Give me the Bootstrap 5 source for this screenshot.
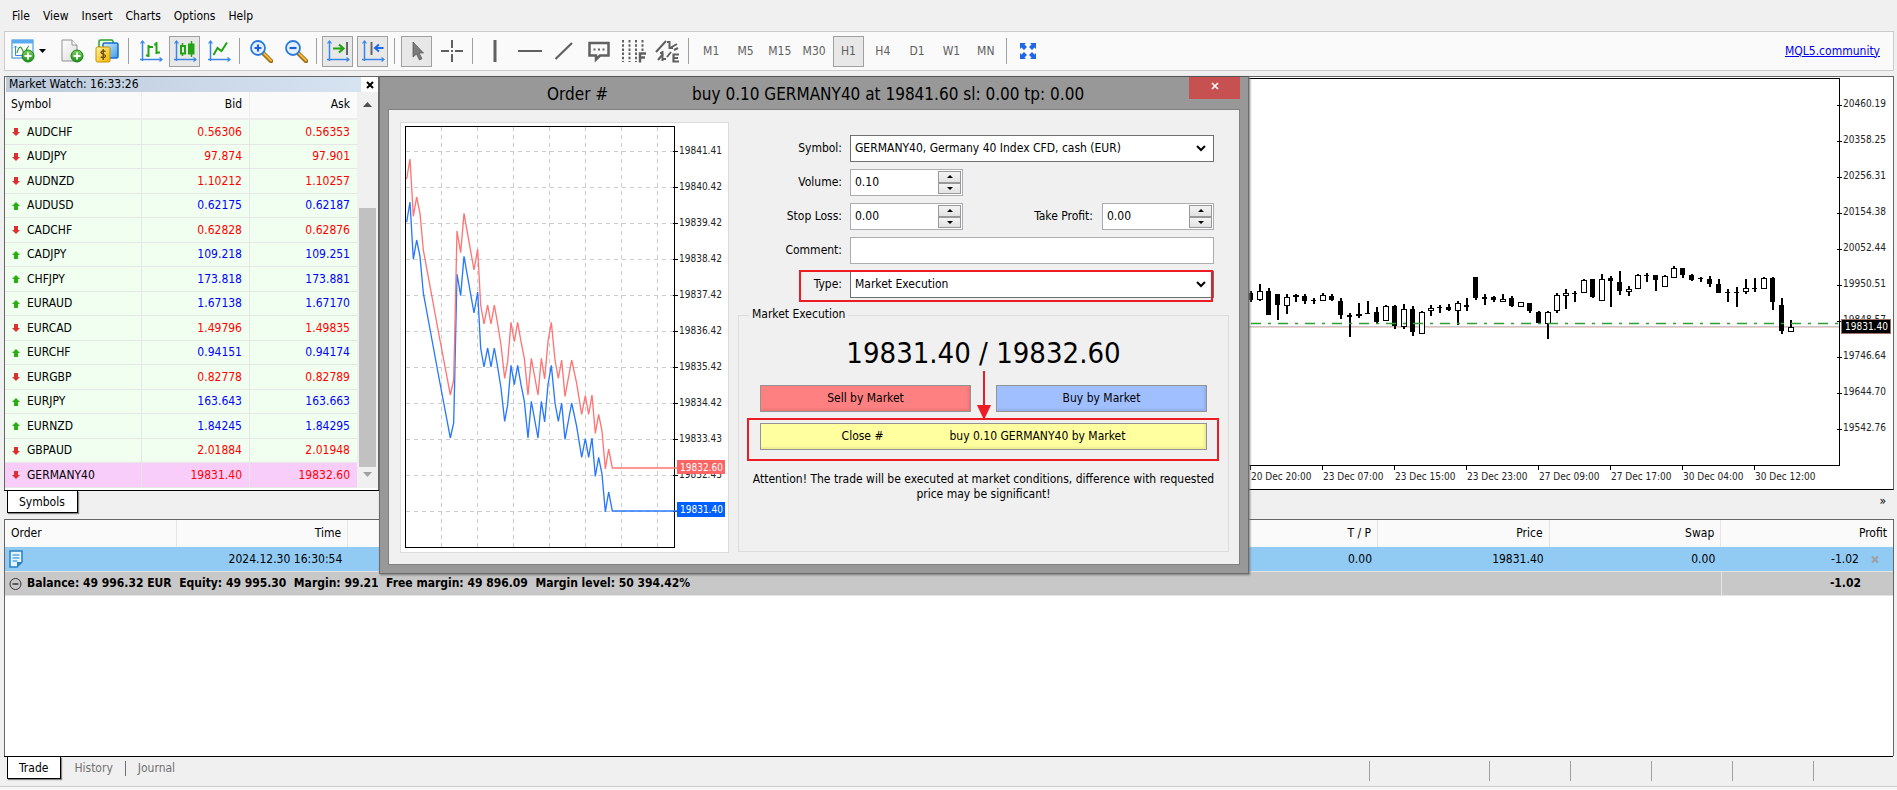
<!DOCTYPE html>
<html lang="en">
<head>
<meta charset="utf-8">
<meta name="viewport" content="width=device-width, initial-scale=1">
<title>Trading Terminal</title>
<link href="https://cdn.jsdelivr.net/npm/bootstrap@5.3.0/dist/css/bootstrap.min.css" rel="stylesheet">
<style>
  body { font-family: "DejaVu Sans Condensed", "DejaVu Sans", sans-serif; font-size: 12px; line-height: 15px; background: #f0f0f0; color: #000; overflow: hidden; }
  a { color: #0000ee; }
  .menu-bar { height: 31px; padding: 2px 0 0 12px; gap: 13px; }
  .menu-bar a { color: #000; text-decoration: none; }
  .tool-bar { height: 40px; margin: 0 3px 0 4px; padding: 0 13px 0 2px; background: #fafafa; border: 1px solid #ccc; }
  .tool-btn { width: 31px; height: 31px; padding: 0; border: 1px solid transparent; background: none; display: flex; align-items: center; justify-content: center; color: #5f5f5f; border-radius: 0; }
  .tool-btn.pressed { background: #e8e8e8; border-color: #a0a0a0; }
  .tool-sep { width: 1px; height: 26px; background: #a0a0a0; margin: 0 5px; }
  .tool-sep.roomy { margin: 0 6px; }
  .tool-sep.snug { margin: 0 5px 0 3px; }
  .tool-group { display: flex; gap: 4px; }
  .style-group { gap: 3px; }
  .draw-group { width: 207px; justify-content: space-around; gap: 0; }
  .period-group { width: 309px; gap: 0; justify-content: space-around; }
  .work-area { position: relative; margin: 5px 3px 0 4px; }
  .watch-panel { width: 375px; height: 414px; border: 1px solid #666; border-bottom: 0; background: #fff; }
  .watch-title { height: 15px; margin: 0 0 0 1px; }
  .watch-title h2 { font-size: 12px; line-height: 15px; margin: 0; padding-left: 3px; width: 355px; background: linear-gradient(90deg, #bccbdc, #d6e3f1); }
  .watch-title button { border: 0; background: #fff; width: 17px; padding: 0; line-height: 0; }
  .quote-table { width: 352px; table-layout: fixed; border-collapse: separate; border-spacing: 0; }
  .quote-table th { height: 28px; font-weight: 400; background: #fafafa; border-bottom: 2px solid #ececec; border-right: 1px solid #ececec; padding: 0 7px 1px 6px; }
  .quote-table td { height: 25px; background: #f0fff0; border-bottom: 1px solid #e6e6e6; border-right: 1px solid #e6e6e6; padding: 0 7px; }
  .quote-table tr:nth-child(even) td { height: 24px; }
  .quote-table td:last-child, .quote-table th:last-child { border-right: 0; }
  .quote-table tr.active-row td { background: #f9cdfa; }
  .quote-table .fall { color: #f00; }
  .quote-table .rise { color: #00f; }
  .quote-name { display: flex; align-items: center; gap: 7px; }
  .watch-scroll { width: 21px; background: #f0f0f0; padding: 9px 2px 7px; }
  .scroll-thumb { width: 17px; height: 259px; margin-top: 100px; background: #c1c1c1; }
  .chart-panel { border: 1px solid #666; border-left: 0; border-bottom-color: #000; background: #fff; height: 414px; }
  .page-tabs { border-top: 1px solid #000; padding-left: 3px; }
  .page-tab { border: 0; background: none; color: #707070; padding: 3px 12px 0 13px; height: 20px; line-height: 15px; }
  .page-tab.current { background: #fff; color: #000; border: 1px solid #000; border-top: 0; height: 22px; padding: 2px 12px 0 11px; box-shadow: 1px 1px 1px #888; }
  .page-tab.divided { border-left: 1px solid #707070; height: 15px; padding: 0 12px; margin-top: 4px; line-height: 15px; }
  .trade-area { padding-top: 6px; }
  .trade-panel { margin: 0 3px 0 4px; border: 1px solid #666; border-bottom: 0; background: #fff; }
  .trade-table { width: 100%; table-layout: fixed; border-collapse: separate; border-spacing: 0; }
  .trade-table th { height: 27px; font-weight: 400; background: #fafafa; border-right: 1px solid #e4e4e4; padding: 0 6px; }
  .trade-table td { padding: 0 6px; }
  .trade-table th:last-child { border-right: 0; }
  .order-row td { height: 25px; background: #91cbf4; border-bottom: 1px solid #e4e4e4; }
  .sum-row td { height: 24px; background: #c8c8c8; font-weight: 700; border-bottom: 1px solid #e4e4e4; }
  .sum-row td:last-child { border-left: 1px solid #e4e4e4; padding-right: 32px; }
  .bottom-tabs { height: 30px; }
  .status-cells { height: 20px; }
  .status-cells i { width: 1px; background: #a0a0a0; height: 20px; }
  .status-line { height: 4px; border-top: 1px solid #ccc; background: #f7f7f7; }

  /* Order window that floats over the terminal */
  .order-window { position: absolute; left: 375px; top: 0; width: 870px; z-index: 10; background: #989898; border: 1px solid #6c6c6c; border-top-color: #555; padding: 0 8px 8px; box-shadow: 1px 1px 2px #777; }
  .order-title { height: 32px; font-size: 17px; line-height: 34px; gap: 84px; padding-left: 159px; position: relative; }
  .order-title span { white-space: pre; }
  .order-close { position: absolute; right: 0; top: 0; width: 51px; height: 22px; border: 0; background: #c75050; padding: 0 0 4px; line-height: 0; }
  .order-body { height: 456px; background: #f0f0f0; border: 1px solid #808080; padding: 12px 10px 12px 11px; gap: 9px; }
  .tick-box { width: 329px; height: 431px; background: #fff; border: 1px solid #dcdcdc; }
  .order-form { width: 491px; padding-top: 13px; }
  .form-line { display: flex; align-items: center; height: 27px; margin-bottom: 7px; padding-right: 15px; }
  .form-line label { width: 104px; text-align: right; margin-right: 8px; flex: none; }
  .form-line label.next-label { width: auto; margin-left: auto; margin-right: 9px; }
  .field-box { height: 27px; border: 1px solid #abadb3; border-radius: 0; background-color: #fff; padding: 0 5px; font-size: 12px; line-height: 15px; color: #000; min-height: 0; flex: 1; min-width: 0; }
  select.field-box { border-color: #707070; appearance: none; background-image: url("data:image/svg+xml,%3Csvg xmlns='http://www.w3.org/2000/svg' width='10' height='7'%3E%3Cpath d='M1 1l4 4 4-4' fill='none' stroke='%23000' stroke-width='2'/%3E%3C/svg%3E"); background-repeat: no-repeat; background-position: right 7px center; background-size: 10px 7px; padding: 0 20px 0 4px; }
  .spin-box { width: 113px; height: 27px; border: 1px solid #abadb3; background: #fff; display: flex; flex: none; padding: 1px; }
  .spin-box.narrow { width: 112px; }
  .spin-box input { border: 0; width: 86px; min-width: 0; padding: 0 3px; outline: 0; flex: 1; }
  .spin-box button { display: flex; align-items: center; justify-content: center; width: 23px; flex: 1; padding: 0; border: 1px solid #999; background: linear-gradient(#f4f4f4, #e2e2e2); }
  .type-line { position: relative; }
  .type-line::after, .close-line::after { content: ""; position: absolute; border: 2px solid #ed1c24; pointer-events: none; }
  .type-line::after { left: 61px; right: 16px; top: -1px; bottom: -4px; }
  .exec-box { border: 1px solid #dcdcdc; height: 237px; margin-top: 17px; padding: 0 21px; position: relative; }
  .exec-box legend { position: absolute; left: 10px; top: -9px; width: auto; padding: 0 3px; font-size: 12px; line-height: 15px; background: #f0f0f0; margin: 0; }
  .big-quote { font-size: 29px; line-height: 34px; padding-top: 20px; margin-bottom: 15px; text-align: center; }
  .deal-btn { height: 27px; border: 1px solid #939393; border-radius: 0; font-size: 12px; line-height: 15px; padding: 0; color: #000; box-shadow: inset -2px -2px 2px rgba(0,0,0,.08); }
  .sell-btn { background: #ff8080; width: 211px; }
  .buy-btn { background: #a0bfff; width: 211px; }
  .shut-btn { background: #ffffa0; width: 100%; white-space: pre; display: flex; justify-content: center; align-items: center; gap: 66px; }
  .close-line { position: relative; margin-top: 11px; }
  .close-line::after { left: -13px; right: -12px; top: -5px; bottom: -11px; }
  .arrow-mark { position: absolute; left: 50%; top: 55px; margin-left: -7px; }
  .warn-text { margin: 22px -12px 0; text-align: center; }
  svg text { font-size: 10px; fill: #222; }
  svg text.tag-text { fill: #fff; }
</style>
</head>
<body>
<div class="d-flex flex-column vh-100">
  <nav class="menu-bar d-flex align-items-center flex-shrink-0" aria-label="Main menu">
    <a href="#">File</a><a href="#">View</a><a href="#">Insert</a><a href="#">Charts</a><a href="#">Options</a><a href="#">Help</a>
  </nav>

  <div class="tool-bar d-flex align-items-center flex-shrink-0">
    <svg width="0" height="0" class="position-absolute">
      <defs>
        <linearGradient id="gPlus" x1="0" y1="0" x2="0" y2="1"><stop offset="0" stop-color="#7ed45a"/><stop offset="1" stop-color="#189018"/></linearGradient>
        <linearGradient id="gPage" x1="0" y1="0" x2="1" y2="1"><stop offset="0" stop-color="#fff"/><stop offset="1" stop-color="#dcdcdc"/></linearGradient>
        <linearGradient id="gGold" x1="0" y1="0" x2="1" y2="1"><stop offset="0" stop-color="#fff3a0"/><stop offset="1" stop-color="#f0b400"/></linearGradient>
        <linearGradient id="gBlue" x1="0" y1="0" x2="1" y2="1"><stop offset="0" stop-color="#d8f0ff"/><stop offset="1" stop-color="#3a9be8"/></linearGradient>
        <g id="plusBall"><circle cx="17" cy="17" r="6" fill="url(#gPlus)" stroke="#168016"/><path d="M17 13.500v7M13.500 17h7" stroke="#fff" stroke-width="2"/></g>
        <g id="axes" stroke="#3a86e8" fill="none" stroke-width="1.500"><path d="M3.500 2v20M1 20.500h22"/><path d="M1.500 4.500L3.500 2l2 2.500M20.500 18.500l2.500 2-2.500 2" stroke-width="1.200"/></g>
        <g id="lens"><path d="M14 14l8 8" stroke="#9a6a10" stroke-width="4.500" stroke-linecap="round"/><path d="M14 13.500l8 8" stroke="#f0b840" stroke-width="2" stroke-linecap="round"/><circle cx="9" cy="9" r="7" fill="#e6f2ff" stroke="#2a7ae0" stroke-width="1.800"/></g>
      </defs>
    </svg>
    <button class="tool-btn" aria-label="New chart"><svg width="24" height="24"><rect x="1" y="1" width="21" height="18" fill="#fff" stroke="#2a86dc"/><path d="M1 1h21v3.500H1z" fill="#5aabf0"/><path d="M4.500 7v9.500H17M3 8.500L4.500 7 6 8.500" fill="none" stroke="#3a86e8"/><path d="M6 14c2-8 4-7 6-2s4-5 6-5" fill="none" stroke="#30a030" stroke-width="1.200"/><use href="#plusBall"/></svg></button>
    <svg width="18" height="6" viewBox="0 0 18 6"><path d="M1 1h7L4.500 5z"/></svg>
    <div class="tool-group">
      <button class="tool-btn" aria-label="New order"><svg width="24" height="24"><path d="M2 1h10l5 5v16H2z" fill="url(#gPage)" stroke="#909090"/><path d="M12 1v5h5" fill="#fff" stroke="#909090"/><use href="#plusBall"/></svg></button>
      <button class="tool-btn" aria-label="Deposit"><svg width="24" height="24"><rect x="4" y="1" width="14" height="14" rx="1.500" fill="#e8ffe0" stroke="#2aa02a" stroke-width="1.500"/><rect x="8" y="4" width="15" height="15" rx="1.500" fill="url(#gBlue)" stroke="#1a6ad0" stroke-width="1.500"/><rect x="1" y="8" width="14" height="15" rx="1.500" fill="url(#gGold)" stroke="#c89000"/><path d="M10.500 12.500c-1-1-4.500-1-4.500 1s4.500 1.500 4.500 3.500-3.500 2-4.800.8M8.200 10v11" fill="none" stroke="#6a4800" stroke-width="1.300"/></svg></button>
    </div>
    <div class="tool-sep roomy"></div>
    <div class="tool-group style-group">
      <button class="tool-btn" aria-label="Bar chart"><svg width="24" height="24"><use href="#axes"/><path d="M9.500 6v12M7 16.500h2.500M9.500 8H14M17.500 3v12M15 5.500h2.500M17.500 13.500H21" stroke="#22a512" stroke-width="2" fill="none"/></svg></button>
      <button class="tool-btn pressed" aria-label="Candles"><svg width="24" height="24"><use href="#axes"/><path d="M9.500 4v13M18.500 2v16" stroke="#22a512" stroke-width="1.500"/><rect x="8" y="7" width="4" height="7.500" fill="#e8e8e8" stroke="#22a512" stroke-width="2"/><rect x="15" y="4.500" width="6.500" height="11" fill="#22a512"/></svg></button>
      <button class="tool-btn" aria-label="Line chart"><svg width="24" height="24"><use href="#axes"/><path d="M6.500 16l4-7 4 3 5.500-8.500" stroke="#22a512" stroke-width="2" fill="none"/></svg></button>
    </div>
    <div class="tool-sep"></div>
    <div class="tool-group">
      <button class="tool-btn" aria-label="Zoom in"><svg width="24" height="24"><use href="#lens"/><path d="M9 5.500v7M5.500 9h7" stroke="#1e60d8" stroke-width="2.200"/></svg></button>
      <button class="tool-btn" aria-label="Zoom out"><svg width="24" height="24"><use href="#lens"/><path d="M5.500 9h7" stroke="#1e60d8" stroke-width="2.200"/></svg></button>
    </div>
    <div class="tool-sep"></div>
    <div class="tool-group">
      <button class="tool-btn pressed" aria-label="Auto scroll"><svg width="24" height="24"><use href="#axes"/><path d="M7 9.500h9M13 5.500l4.500 4-4.500 4" stroke="#22a512" stroke-width="2.200" fill="none"/><path d="M21 3v13" stroke="#666" stroke-width="2"/></svg></button>
      <button class="tool-btn pressed" aria-label="Chart shift"><svg width="24" height="24"><use href="#axes"/><path d="M10.500 3v13" stroke="#666" stroke-width="2"/><path d="M14.500 9h8M18 5.500L14 9l4 3.500" stroke="#1e68e8" stroke-width="2" fill="none"/></svg></button>
    </div>
    <div class="tool-sep roomy"></div>
    <div class="tool-group">
      <button class="tool-btn pressed" aria-label="Cursor"><svg width="24" height="24"><path d="M8 3v15l3.500-3 3 6 2.500-1.300-3-5.700h4.500z" fill="#7c7c7c" stroke="#5c5c5c" stroke-width=".8"/></svg></button>
      <button class="tool-btn" aria-label="Crosshair"><svg width="24" height="24"><path d="M12 1v8M12 15v8M1 12h8M15 12h8" stroke="#606060" stroke-width="2"/><rect x="11" y="11" width="2" height="2" fill="#606060"/></svg></button>
    </div>
    <div class="tool-sep"></div>
    <div class="tool-group draw-group">
      <button class="tool-btn" aria-label="Vertical line"><svg width="24" height="24"><path d="M12 1v22" stroke="#606060" stroke-width="3"/></svg></button>
      <button class="tool-btn" aria-label="Horizontal line"><svg width="24" height="24"><path d="M0 12h24" stroke="#606060" stroke-width="2"/></svg></button>
      <button class="tool-btn" aria-label="Trend line"><svg width="24" height="24"><path d="M3.500 20L20 4" stroke="#606060" stroke-width="2.200"/></svg></button>
      <button class="tool-btn" aria-label="Text label"><svg width="24" height="24"><path d="M2.500 4h19v12.500H13L9 20.500v-4H2.500z" fill="none" stroke="#606060" stroke-width="2.500"/><path d="M6.500 10.500h2M11 10.500h2M15.500 10.500h2" stroke="#606060" stroke-width="2.200"/></svg></button>
      <button class="tool-btn" aria-label="Fibonacci"><svg width="25" height="24"><path d="M2 1v22M8.500 1v22M15 1v22M21.500 1v11" stroke="#606060" stroke-width="2" stroke-dasharray="2.500 1.700"/><path d="M19 23.500v-9h6M19 18.500h5" stroke="#606060" stroke-width="2.500" fill="none"/></svg></button>
      <button class="tool-btn" aria-label="Equidistant channel"><svg width="25" height="24"><path d="M1 13L11 2M3 21l5-6M15 9l7-4" stroke="#606060" stroke-width="2"/><path d="M14.500 2v8M12 3h2.500M14.500 9H18M7.500 12v10M5 14h2.500M7.500 20H11M12 18l4-5M19 11l4-2" stroke="#606060" stroke-width="2" fill="none"/><path d="M24 15.500h-5.500v7H24M18.500 19H23" stroke="#606060" stroke-width="2.200" fill="none"/></svg></button>
    </div>
    <div class="tool-sep snug"></div>
    <div class="tool-group period-group">
      <button class="tool-btn">M1</button><button class="tool-btn">M5</button><button class="tool-btn">M15</button><button class="tool-btn">M30</button><button class="tool-btn pressed">H1</button><button class="tool-btn">H4</button><button class="tool-btn">D1</button><button class="tool-btn">W1</button><button class="tool-btn">MN</button>
    </div>
    <div class="tool-sep snug"></div>
    <button class="tool-btn" aria-label="Full screen"><svg width="16" height="16"><g fill="#1e68e8"><path d="M0 0h6L4.500 1.500 7 4 4 7 1.500 4.500 0 6z"/><path d="M16 0h-6l1.500 1.500L9 4l3 3 2.500-2.500L16 6z"/><path d="M0 16h6l-1.500-1.500L7 12 4 9l-2.500 2.500L0 10z"/><path d="M16 16h-6l1.500-1.500L9 12l3-3 2.500 2.500L16 10z"/></g></svg></button>
    <a href="#" class="ms-auto">MQL5.community</a>
  </div>

  <main class="work-area flex-shrink-0">
    <div class="d-flex">
      <section class="flex-shrink-0">
        <div class="watch-panel">
          <div class="watch-title d-flex"><h2 class="fw-normal">Market Watch: 16:33:26</h2><button aria-label="Close"><svg width="8" height="8"><path d="M1 1l6 6M7 1L1 7" stroke="#000" stroke-width="2"/></svg></button></div>
          <div class="d-flex">
            <table class="quote-table">
              <colgroup><col style="width:137px"><col style="width:108px"><col style="width:107px"></colgroup>
              <thead><tr><th>Symbol</th><th class="text-end">Bid</th><th class="text-end">Ask</th></tr></thead>
              <tbody id="quotes"></tbody>
            </table>
            <div class="watch-scroll">
              <svg class="d-block mx-auto" width="9" height="7"><path d="M0 6l4.500-5L9 6z" fill="#505050"/></svg>
              <div class="scroll-thumb"></div>
              <svg class="d-block mx-auto mt-1" width="9" height="7"><path d="M0 1l4.500 5L9 1z" fill="#a0a0a0"/></svg>
            </div>
          </div>
        </div>
        <div class="page-tabs d-flex"><button class="page-tab current">Symbols</button></div>
      </section>
      <section class="flex-grow-1">
        <div class="chart-panel"><svg id="mainChart" class="d-block" width="100%" height="412" viewBox="380 77 1513 412" preserveAspectRatio="xMaxYMin meet"></svg></div>
        <div class="text-end pt-1 pe-1 me-1">»</div>
      </section>
    </div>

    <div class="order-window" role="dialog" aria-label="Order">
      <div class="order-title d-flex"><span>Order #</span><span>buy 0.10 GERMANY40 at 19841.60 sl: 0.00 tp: 0.00</span>
        <button class="order-close" aria-label="Close window"><svg width="8" height="8"><path d="M1 1l6 6M7 1L1 7" stroke="#fff" stroke-width="1.600"/></svg></button>
      </div>
      <div class="order-body d-flex">
        <div class="tick-box flex-shrink-0"><svg id="tickChart" class="d-block" width="327" height="429" viewBox="401 123 327 429"></svg></div>
        <form class="order-form">
          <div class="form-line"><label for="fSymbol">Symbol:</label><select id="fSymbol" class="field-box"><option>GERMANY40, Germany 40 Index CFD, cash (EUR)</option></select></div>
          <div class="form-line"><label for="fVolume">Volume:</label><div class="spin-box"><input id="fVolume" value="0.10"><div class="d-flex flex-column"><button type="button" aria-label="More"><svg width="6" height="3"><path d="M0 3l3-3 3 3z"/></svg></button><button type="button" aria-label="Less"><svg width="6" height="3"><path d="M0 0l3 3 3-3z"/></svg></button></div></div></div>
          <div class="form-line"><label for="fStop">Stop Loss:</label><div class="spin-box"><input id="fStop" value="0.00"><div class="d-flex flex-column"><button type="button" aria-label="More"><svg width="6" height="3"><path d="M0 3l3-3 3 3z"/></svg></button><button type="button" aria-label="Less"><svg width="6" height="3"><path d="M0 0l3 3 3-3z"/></svg></button></div></div>
            <label for="fTake" class="next-label">Take Profit:</label><div class="spin-box narrow"><input id="fTake" value="0.00"><div class="d-flex flex-column"><button type="button" aria-label="More"><svg width="6" height="3"><path d="M0 3l3-3 3 3z"/></svg></button><button type="button" aria-label="Less"><svg width="6" height="3"><path d="M0 0l3 3 3-3z"/></svg></button></div></div></div>
          <div class="form-line"><label for="fComment">Comment:</label><input id="fComment" class="field-box"></div>
          <div class="form-line type-line"><label for="fType">Type:</label><select id="fType" class="field-box"><option>Market Execution</option></select></div>
          <fieldset class="exec-box">
            <legend>Market Execution</legend>
            <div class="big-quote">19831.40 / 19832.60</div>
            <svg class="arrow-mark" width="14" height="49"><path d="M7 0v36" stroke="#ed1c24" stroke-width="2"/><path d="M0 34h14L7 49z" fill="#ed1c24"/></svg>
            <div class="d-flex justify-content-between"><button type="button" class="deal-btn sell-btn">Sell by Market</button><button type="button" class="deal-btn buy-btn">Buy by Market</button></div>
            <div class="close-line"><button type="button" class="deal-btn shut-btn"><span>Close #</span><span>buy 0.10 GERMANY40 by Market</span></button></div>
            <p class="warn-text">Attention! The trade will be executed at market conditions, difference with requested price may be significant!</p>
          </fieldset>
        </form>
      </div>
    </div>
  </main>

  <section class="trade-area d-flex flex-column flex-grow-1">
    <div class="trade-panel flex-grow-1">
      <table class="trade-table">
        <thead><tr><th>Order</th><th class="text-end">Time</th><th></th><th></th><th></th><th></th><th></th><th class="text-end">T / P</th><th class="text-end">Price</th><th class="text-end">Swap</th><th class="text-end">Profit</th></tr></thead>
        <tbody>
          <tr class="order-row"><td class="ps-1"><svg class="d-block" width="14" height="18"><path d="M1 1h12v11l-5 5H1z" fill="#e4f4ff" stroke="#2a80c0" stroke-width="1.500"/><path d="M3.500 5h7M3.500 8h7M3.500 11h5" stroke="#58a8e0" stroke-width="1.300"/><path d="M13 12H8v5z" fill="#2a80c0"/></svg></td><td class="text-end">2024.12.30 16:30:54</td><td></td><td></td><td></td><td></td><td></td><td class="text-end">0.00</td><td class="text-end">19831.40</td><td class="text-end">0.00</td>
            <td><div class="d-flex justify-content-end align-items-center pe-2"><span class="me-2 pe-1">-1.02</span><svg width="8" height="9"><path d="M1 1.500l6 6M7 1.500l-6 6" stroke="#a0a0a0" stroke-width="2.200"/></svg></div></td></tr>
          <tr class="sum-row"><td colspan="10" class="ps-1"><div class="d-flex align-items-center"><svg class="me-1" width="14" height="14"><circle cx="6.500" cy="7" r="5.500" fill="none" stroke="#333"/><path d="M3.500 7h6" stroke="#333" stroke-width="1.500"/></svg><span>Balance: 49 996.32 EUR&nbsp; Equity: 49 995.30&nbsp; Margin: 99.21&nbsp; Free margin: 49 896.09&nbsp; Margin level: 50 394.42%</span></div></td><td class="text-end">-1.02</td></tr>
        </tbody>
      </table>
    </div>
    <div class="bottom-tabs d-flex">
      <div class="page-tabs d-flex align-items-start flex-grow-1 mx-1"><button class="page-tab current">Trade</button><button class="page-tab">History</button><button class="page-tab divided">Journal</button>
        <div id="statusCells" class="status-cells d-flex ms-auto mt-1"></div></div>
    </div>
    <div class="status-line"></div>
  </section>
</div>

<script>
  // Quotes: symbol, bid, ask, rising
  const quotes = [
    ['AUDCHF','0.56306','0.56353',0],['AUDJPY','97.874','97.901',0],['AUDNZD','1.10212','1.10257',0],['AUDUSD','0.62175','0.62187',1],
    ['CADCHF','0.62828','0.62876',0],['CADJPY','109.218','109.251',1],['CHFJPY','173.818','173.881',1],['EURAUD','1.67138','1.67170',1],
    ['EURCAD','1.49796','1.49835',0],['EURCHF','0.94151','0.94174',1],['EURGBP','0.82778','0.82789',0],['EURJPY','163.643','163.663',1],
    ['EURNZD','1.84245','1.84295',1],['GBPAUD','2.01884','2.01948',0],['GERMANY40','19831.40','19832.60',0]];
  document.getElementById('quotes').innerHTML = quotes.map(([s, b, a, up]) => {
    const c = up ? 'rise' : 'fall';
    const arrow = up ? '<path d="M4 0l4 4H6v4H2V4H0z" fill="#28b010"/>' : '<path d="M4 8l4-4H6V0H2v4H0z" fill="#dc3030"/>';
    return `<tr class="${s === 'GERMANY40' ? 'active-row' : ''}"><td><span class="quote-name"><svg class="flex-shrink-0" width="8" height="8">${arrow}</svg>${s}</span></td><td class="text-end ${c}">${b}</td><td class="text-end ${c}">${a}</td></tr>`;
  }).join('');

  // Hourly candles: high, open/close top, open/close bottom, low, filled. Three units to a pixel, from y = 60.
  const candles = [
    [694,700,720,725,1],[672,694,718,722,0],[684,694,764,766,1],[702,702,734,781,1],[702,712,735,762,0],[702,704,709,727,0],[702,708,722,733,1],[713,720,724,733,1],
    [699,706,721,722,0],[701,708,720,722,1],[714,724,764,777,1],[760,764,772,832,1],[728,762,766,773,0],[723,758,761,762,1],[741,756,787,790,1],[736,739,781,782,0],
    [736,737,799,808,1],[732,748,799,806,0],[739,748,815,827,1],[752,757,818,820,0],[736,744,751,767,0],[736,742,745,759,1],[733,742,751,752,1],[724,730,751,795,0],
    [715,736,740,754,1],[652,652,713,721,1],[702,712,717,735,1],[709,710,721,725,1],[701,718,723,725,0],[709,714,737,740,1],[726,727,739,740,0],[729,730,754,760,1],
    [753,755,789,790,1],[754,755,788,838,0],[699,706,751,760,0],[687,700,706,748,0],[693,699,701,725,1],[658,659,697,699,0],[657,658,712,714,1],[642,656,721,723,0],
    [647,653,664,741,1],[633,667,692,706,1],[678,686,694,709,0],[642,646,685,687,0],[639,644,647,665,1],[644,646,659,692,1],[644,649,679,682,0],[618,625,650,655,0],
    [624,625,644,655,1],[642,646,659,664,1],[651,655,657,666,1],[648,658,672,681,1],[657,672,698,699,1],[687,696,698,725,1],[681,696,698,741,1],[657,683,694,701,0],
    [654,683,686,695,1],[651,655,683,687,0],[651,655,727,749,1],[715,734,813,822,1],[779,802,812,814,0]];
  let g = '<g stroke="#000" fill="none" shape-rendering="crispEdges"><path d="M380 78.500H1839.500V465.500H380"/>';
  const prices = ['20460.19','20358.25','20256.31','20154.38','20052.44','19950.51','19848.57','19746.64','19644.70','19542.76'];
  prices.forEach((p, i) => { g += `<path d="M1837 ${105.5 + 36 * i}h5"/>`; });
  const times = ['20 Dec 20:00','23 Dec 07:00','23 Dec 15:00','23 Dec 23:00','27 Dec 09:00','27 Dec 17:00','30 Dec 04:00','30 Dec 12:00'];
  times.forEach((t, i) => { g += `<path d="M${1250.5 + 72 * i} 466v4"/>`; });
  g += '</g><path d="M380 326.500H1839" stroke="#c8c4cc"/><path d="M380 327.500H1839" stroke="#f0d4cc"/>';
  candles.forEach(([h, t, b, l, f], i) => {
    const x = 1250.5 + 9 * i, y = v => Math.round(60 + v / 3), top = y(t), bh = Math.max(1, y(b) - top);
    g += `<g shape-rendering="crispEdges"><path d="M${x} ${y(h)}V${y(l)}" stroke="#000" stroke-width="2"/>` +
      (f ? `<rect x="${x - 3}" y="${top}" width="5" height="${bh}"/>` : `<rect x="${x - 2.5}" y="${top + .5}" width="5" height="${bh}" fill="#fff" stroke="#000"/>`) + '</g>';
  });
  g += '<path d="M1251 323.500H1839" stroke="#30a030" stroke-width="1.500" stroke-dasharray="10 7 3 7"/>';
  prices.forEach((p, i) => { g += `<text x="1843" y="${107 + 36 * i}">${p}</text>`; });
  times.forEach((t, i) => { g += `<text x="${1251 + 72 * i}" y="480">${t}</text>`; });
  g += '<rect x="1841.500" y="319.500" width="49" height="14" stroke="#a07068"/><text x="1845" y="330" class="tag-text">19831.40</text>';
  document.getElementById('mainChart').innerHTML = g;

  // Tick chart: the bid runs one spread below the ask
  const ask = '95,312 105,252 115,424 125,366 135,415 145,525 192,780 226,960 236,915 239,790 246,468 257,533 267,415 297,585 308,522 317,690 327,747 338,690 348,747 358,690 368,747 378,810 389,910 398,860 408,742 418,800 428,742 438,800 448,850 459,960 469,850 489,960 499,850 509,912 519,800 529,742 540,855 550,910 560,855 570,964 590,855 605,925 620,1018 631,962 641,1018 651,960 661,1075 671,1018 681,1068 691,1182 701,1122 712,1179 906,1179';
  let k = '<g stroke="#ccc" stroke-dasharray="4 4" shape-rendering="crispEdges">';
  for (let i = 0; i < 7; i++) k += `<path d="M${441.5 + 36 * i} 127V547"/>`;
  for (let i = 0; i < 11; i++) k += `<path d="M406 ${151.5 + 36 * i}H674"/>`;
  k += '</g><g stroke="#000" fill="none" shape-rendering="crispEdges"><rect x="405.500" y="126.500" width="269" height="421"/>';
  for (let i = 0; i < 11; i++) k += `<path d="M673 ${151.5 + 36 * i}h5"/>`;
  k += '</g>';
  ['19841.41','19840.42','19839.42','19838.42','19837.42','19836.42','19835.42','19834.42','19833.43','19832.43'].forEach((p, i) => { k += `<text x="679" y="${154 + 36 * i}">${p}</text>`; });
  k += `<g transform="translate(375 75) scale(.33333)" fill="none" stroke-width="4"><polyline points="${ask}" transform="translate(0 129)" stroke="#2878ff"/><polyline points="${ask}" stroke="#ff7474"/></g>`;
  k += '<rect x="677" y="460" width="48" height="14" fill="#ff6464"/><text x="680" y="471" class="tag-text">19832.60</text><rect x="677" y="502" width="48" height="15" fill="#0060ff"/><text x="680" y="513" class="tag-text">19831.40</text>';
  document.getElementById('tickChart').innerHTML = k;

  // Status bar dividers: width of each cell
  document.getElementById('statusCells').innerHTML = [119, 80, 80, 80, 80, 79].map(w => `<i></i><span style="width:${w}px"></span>`).join('');
</script>
<script src="https://cdn.jsdelivr.net/npm/bootstrap@5.3.0/dist/js/bootstrap.bundle.min.js"></script>
</body>
</html>
